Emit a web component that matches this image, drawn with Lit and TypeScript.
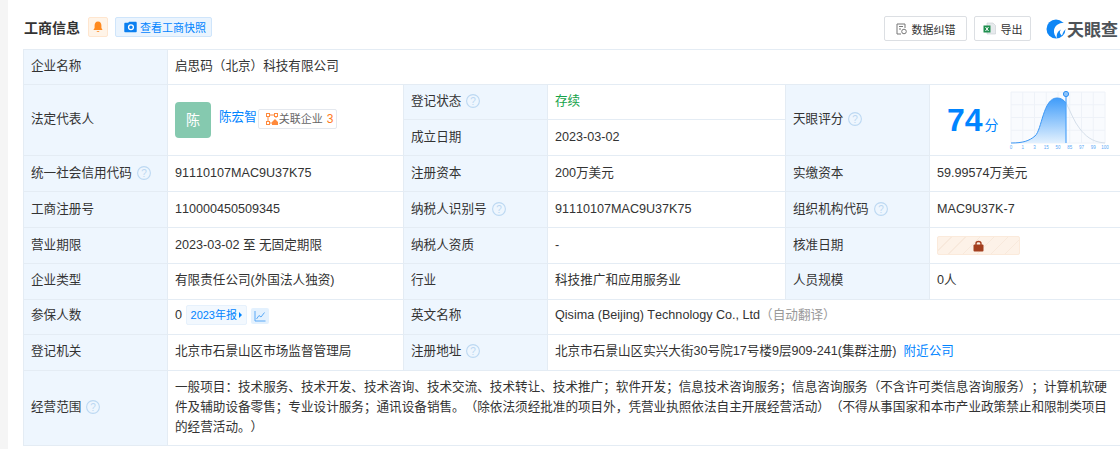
import { LitElement, html, css, svg } from "lit";
import { customElement } from "lit/decorators.js";

const help = html`<svg class="help" viewBox="0 0 14 14"><circle cx="7" cy="7" r="6.4" fill="none" stroke="#bcd8f2" stroke-width="1.1"/><text x="7" y="10.6" text-anchor="middle" font-size="10" fill="#bcd8f2" font-family="Liberation Sans">?</text></svg>`;

const ticks = ["0", "1", "3", "15", "50", "85", "97", "99", "100"];

@customElement("app-root")
export class AppRoot extends LitElement {
  static styles = css`
    :host { display: block; width: 1120px; height: 449px; overflow: hidden; background: #fff; font-family: "Liberation Sans", "Noto Sans CJK SC", sans-serif; font-size: 12.6px; color: #333; box-sizing: border-box; text-spacing-trim: space-all; font-kerning: none; }
    .page { height: 449px; display: flex; }
    .strip { width: 8px; background: #f5f5f5; flex: none; }
    .main { flex: 1; padding: 16px 2px 0 15px; min-width: 0; display: flex; flex-direction: column; gap: 8px; }
    .head { height: 25px; display: flex; align-items: center; }
    .title { font-size: 14px; font-weight: 700; color: #333; margin-top: -4px; padding-left: 1px; }
    .bell { width: 20px; height: 20px; margin-left: 8px; margin-top: -3px; box-sizing: border-box; border: 1px solid #ffe6cf; background: #fff4e8; border-radius: 2px; display: flex; align-items: center; justify-content: center; }
    .snap { margin-left: 7px; margin-top: -3px; height: 20px; width: 97px; box-sizing: border-box; padding-left: 8px; border: 1px solid #cfe5fb; background: #eaf4fe; border-radius: 2px; display: flex; align-items: center; gap: 3px; color: #0084ff; font-size: 11px; }
    .spacer { flex: 1; }
    .btn { height: 25px; box-sizing: border-box; border: 1px solid #dcdfe3; border-radius: 2px; display: flex; align-items: center; justify-content: center; gap: 5px; font-size: 11px; color: #333; background: #fff; }
    .b1 { width: 83px; }
    .b2 { width: 57px; margin-left: 7px; }
    .logo { margin-left: 15px; width: 72px; display: flex; align-items: center; gap: 1px; overflow: hidden; font-size: 17px; font-weight: 700; color: #4e5358; white-space: nowrap; }
    table { border-collapse: collapse; table-layout: fixed; width: 1100px; flex: none; }
    td { border: 1px solid #e4ecf4; padding: 0 7px 2px; line-height: 18px; vertical-align: middle; box-sizing: border-box; white-space: nowrap; }
    td.k { background: #eef6fe; color: #333; }
    .r35 td { height: 36px; }
    .r1 td { height: 35px; }
    tr.up td { padding-bottom: 4px; }
    .help { width: 14px; height: 14px; vertical-align: -3px; margin-left: 5px; }
    td.wrap { white-space: normal; line-height: 20px; padding-right: 12px; }
    td.av { padding-bottom: 0; }
    .person { display: flex; align-items: center; height: 36px; margin-top: -1px; }
    .avatar { width: 36px; height: 36px; border-radius: 4px; background: #85c9af; color: #fff; display: flex; align-items: center; justify-content: center; font-size: 14px; flex: none; }
    .pname { margin-left: 8px; color: #0084ff; line-height: 18px; margin-top: -6px; }
    .assoc { margin: -1px 0 0 1px; height: 20px; box-sizing: border-box; border: 1px solid #e4e8ee; border-radius: 2px; display: inline-flex; align-items: center; padding: 0 3px 0 7px; gap: 1px; font-size: 11px; color: #666; }
    .assoc b { font-weight: 400; font-size: 12px; color: #ff7a1a; margin-left: 3px; }
    .green { color: #16a34a; }
    td.score { padding: 0; }
    .scorebox { display: flex; align-items: center; padding-left: 17px; height: 70px; }
    .num { font-size: 32px; font-weight: 700; color: #0084ff; line-height: 1; }
    .fen { font-size: 14px; color: #0084ff; margin: 10px 0 0 2px; }
    .chart { margin-left: 10px; display: block; }
    .lock { width: 83px; height: 19px; box-sizing: border-box; border-radius: 2px; border: 1px solid #fbeadb; background: repeating-linear-gradient(135deg, #fdf2e8 0 9px, #f8e9dc 9px 10px); display: flex; align-items: center; justify-content: center; margin-top: 2px; }
    .tag { display: inline-flex; align-items: center; height: 20px; box-sizing: border-box; padding: 0 4px; background: #f2f8fe; border: 1px solid #e6f1fc; border-radius: 2px; color: #0084ff; font-size: 11px; gap: 2px; }
    .tri { width: 0; height: 0; border-left: 3px solid #0084ff; border-top: 3px solid transparent; border-bottom: 3px solid transparent; }
    .trend { display: inline-flex; align-items: center; justify-content: center; width: 18px; height: 16px; background: #e3f1fe; border-radius: 2px; margin-left: 4px; vertical-align: -3px; }
    .grey { color: #999; }
    a { color: #0084ff; text-decoration: none; margin-left: 7px; }
  `;

  private chart() {
    const xs = [0, 1, 2, 3, 4, 5, 6, 7, 8];
    return html`<svg class="chart" width="100" height="60" viewBox="0 0 100 60">
      <defs><linearGradient id="g" x1="0" y1="0" x2="0" y2="1"><stop offset="0" stop-color="#3f9cfa"/><stop offset="1" stop-color="#e3f1fe"/></linearGradient></defs>
      <rect x="2" y="2" width="94" height="51" fill="#f9fbfe"/>
      ${xs.map((i) => svg`<line x1=${2 + i * 11.75} y1="2" x2=${2 + i * 11.75} y2="53" stroke="#eef2f8" stroke-width="1"/>`)}
      ${[0, 1, 2, 3, 4].map((i) => svg`<line x1="2" y1=${2 + i * 12.75} x2="96" y2=${2 + i * 12.75} stroke="#eef2f8" stroke-width="1"/>`)}
      <path d="M57 13C61 20 65 32 71 39C76 45 82 52 96 53" fill="none" stroke="#d5dfea" stroke-width="1"/>
      <path d="M2 53C14 53 20 51 26 46C33 40 34 8 48 8C52 8 55 10 57 13L57 53Z" fill="url(#g)"/>
      <path d="M2 53C14 53 20 51 26 46C33 40 34 8 48 8C52 8 55 10 57 13" fill="none" stroke="#3b97f5" stroke-width="1"/>
      <line x1="57" y1="6" x2="57" y2="53" stroke="#4da3fa" stroke-width="1.2"/>
      <circle cx="57" cy="4" r="2.6" fill="#8cc3fa" stroke="#2e90f4" stroke-width="1"/>
      ${ticks.map((t, i) => svg`<text x=${2 + i * 11.75} y="59" font-size="4.5" text-anchor="middle" fill="#5aa9f7" font-family="Liberation Sans">${t}</text>`)}
    </svg>`;
  }

  render() {
    return html`<div class="page"><div class="strip"></div><div class="main">
      <div class="head">
        <span class="title">工商信息</span>
        <span class="bell"><svg width="10" height="12" viewBox="0 0 10 12"><path d="M5 0.5C7.4 0.5 8.4 2.4 8.4 4.4V7L9.6 9H0.4L1.6 7V4.4C1.6 2.4 2.6 0.5 5 0.5ZM3.6 10H6.4C6.2 11.2 3.8 11.2 3.6 10Z" fill="#ff8a1f"/></svg></span>
        <span class="snap"><svg width="13" height="12" viewBox="0 0 14 12"><path d="M1.5 1.5H4.5L5.5 0.3H12.5C13.3 0.3 13.7 .8 13.7 1.5V10.5C13.7 11.2 13.3 11.7 12.5 11.7H1.5C.7 11.7 .3 11.2 .3 10.5V2.7C.3 2 .7 1.5 1.5 1.5Z" fill="#0a7ff0"/><circle cx="7.5" cy="6.3" r="2.6" fill="none" stroke="#fff" stroke-width="1.4"/></svg>查看工商快照</span>
        <span class="spacer"></span>
        <span class="btn b1"><svg width="11" height="12" viewBox="0 0 11 12"><path d="M9 5V1H1V11H5" fill="none" stroke="#777" stroke-width="1"/><path d="M3 3.5H7M3 6H5" stroke="#777"/><circle cx="8" cy="8.5" r="2.3" fill="none" stroke="#777"/></svg>数据纠错</span>
        <span class="btn b2"><svg width="13" height="13" viewBox="0 0 13 13"><path d="M4 1H10L12.5 3.5V12H4Z" fill="#e7eaed" stroke="#c7ccd1" stroke-width=".6"/><rect x=".5" y="3.5" width="7" height="7" fill="#1f8f4e"/><path d="M2.5 5L5.5 9M5.5 5L2.5 9" stroke="#fff"/></svg>导出</span>
        <span class="logo"><svg width="20" height="20" viewBox="0 0 20 20" style="flex:none"><circle cx="10" cy="10" r="9.5" fill="#0f86f5"/><path d="M20 4C14 3 9 6 8 11C7.5 14 9 17 11 19.5C10 15 12 12 15 10.5C13 13 14 15 16 16.5C17 13 18.5 11 20 10Z" fill="#fff"/></svg>天眼查</span>
      </div>
      <table>
        <colgroup><col style="width:144px"/><col style="width:236px"/><col style="width:144px"/><col style="width:238px"/><col style="width:144px"/><col style="width:194px"/></colgroup>
        <tr class="r1"><td class="k">企业名称</td><td colspan="5">启思码（北京）科技有限公司</td></tr>
        <tr class="r1"><td class="k" rowspan="2">法定代表人</td>
          <td class="av" rowspan="2"><div class="person"><span class="avatar">陈</span><span class="pname">陈宏智</span><span class="assoc"><svg width="12" height="12" viewBox="0 0 12 12"><path d="M2 2H10M2 2V10H6M10 2V5" fill="none" stroke="#ff8a3c"/><rect x=".5" y=".5" width="3" height="3" fill="#fff" stroke="#ff8a3c"/><rect x="8.5" y=".5" width="3" height="3" fill="#fff" stroke="#ff8a3c"/><rect x=".5" y="8.5" width="3" height="3" fill="#fff" stroke="#ff8a3c"/><path d="M6 9L9 6L12 9V12H6Z" fill="#ff8a3c"/></svg>关联企业<b>3</b></span></div></td>
          <td class="k">登记状态${help}</td><td><span class="green">存续</span></td>
          <td class="k" rowspan="2">天眼评分${help}</td>
          <td class="score" rowspan="2"><div class="scorebox"><span class="num">74</span><span class="fen">分</span>${this.chart()}</div></td></tr>
        <tr class="r35"><td class="k">成立日期</td><td>2023-03-02</td></tr>
        <tr class="r35"><td class="k">统一社会信用代码${help}</td><td>91110107MAC9U37K75</td><td class="k">注册资本</td><td>200万美元</td><td class="k">实缴资本</td><td>59.99574万美元</td></tr>
        <tr class="r35"><td class="k">工商注册号</td><td>110000450509345</td><td class="k">纳税人识别号${help}</td><td>91110107MAC9U37K75</td><td class="k">组织机构代码${help}</td><td>MAC9U37K-7</td></tr>
        <tr class="r35"><td class="k">营业期限</td><td>2023-03-02 至 无固定期限</td><td class="k">纳税人资质</td><td>-</td><td class="k">核准日期</td><td><div class="lock"><svg width="11" height="12" viewBox="0 0 11 12"><path d="M3 5V3.5C3 .9 8 .9 8 3.5V5" fill="none" stroke="#a33f1f" stroke-width="1.4"/><rect x=".5" y="4.5" width="10" height="7" rx="1" fill="#a33f1f"/></svg></div></td></tr>
        <tr class="r35 up"><td class="k">企业类型</td><td>有限责任公司(外国法人独资)</td><td class="k">行业</td><td>科技推广和应用服务业</td><td class="k">人员规模</td><td>0人</td></tr>
        <tr class="r1 up"><td class="k">参保人数</td><td>0 <span class="tag">2023年报<i class="tri"></i></span><span class="trend"><svg width="12" height="12" viewBox="0 0 12 12"><path d="M1 1V11H11.5" fill="none" stroke="#5aa9f7"/><path d="M2.5 9L5 5.5L7 7L10.5 2.5" fill="none" stroke="#5aa9f7"/></svg></span></td><td class="k">英文名称</td><td colspan="3">Qisima (Beijing) Technology Co., Ltd<span class="grey">（自动翻译）</span></td></tr>
        <tr class="r35 up"><td class="k">登记机关</td><td>北京市石景山区市场监督管理局</td><td class="k">注册地址${help}</td><td colspan="3">北京市石景山区实兴大街30号院17号楼9层909-241(集群注册)<a>附近公司</a></td></tr>
        <tr><td class="k" style="height:75px">经营范围${help}</td><td class="wrap" colspan="5">一般项目：技术服务、技术开发、技术咨询、技术交流、技术转让、技术推广；软件开发；信息技术咨询服务；信息咨询服务（不含许可类信息咨询服务）；计算机软硬件及辅助设备零售；专业设计服务；通讯设备销售。（除依法须经批准的项目外，凭营业执照依法自主开展经营活动）（不得从事国家和本市产业政策禁止和限制类项目的经营活动。）</td></tr>
      </table>
    </div></div>`;
  }
}
